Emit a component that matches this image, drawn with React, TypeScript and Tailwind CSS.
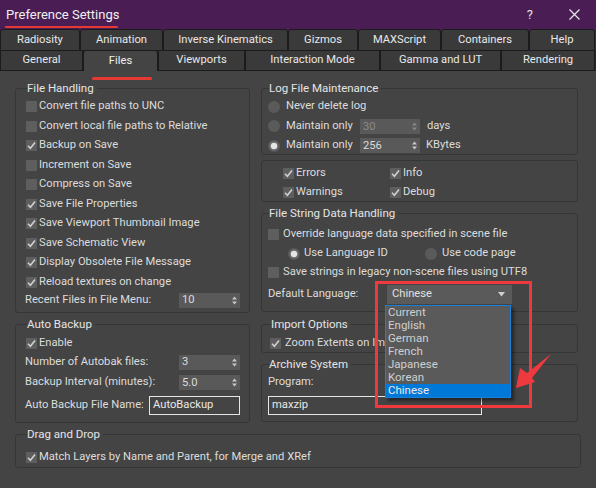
import React from "react";

const font = { fontFamily: "Roboto, 'Noto Sans', sans-serif" };

function Check({ on }: { on?: boolean }) {
  return (
    <span className="w-[11px] h-[11px] bg-[#5e5e5e] flex items-center justify-center shrink-0">
      {on && (
        <svg width="9" height="9" viewBox="0 0 9 9">
          <path d="M1 4.8 L3.4 7.2 L8 1.6" stroke="#d0d0d0" strokeWidth="1.6" fill="none" />
        </svg>
      )}
    </span>
  );
}

function Radio({ on }: { on?: boolean }) {
  return (
    <span className="w-[12px] h-[12px] rounded-full bg-[#5a5a5a] flex items-center justify-center shrink-0">
      {on && <span className="w-[6px] h-[6px] rounded-full bg-[#e6e6e6] shadow-[0_0_2px_#fff]" />}
    </span>
  );
}

function CheckRow({ label, on, h = "h-[19.5px]" }: { label: string; on?: boolean; h?: string }) {
  return (
    <div className={`flex items-center gap-[2px] ${h}`}>
      <Check on={on} />
      <span className="whitespace-nowrap">{label}</span>
    </div>
  );
}

function Spinner({ value, w = "w-[61px]", dim }: { value: string; w?: string; dim?: boolean }) {
  return (
    <div className={`${w} h-[15px] bg-[#595959] flex items-center justify-between pl-[3px] pr-[3px] shrink-0 ${dim ? "text-[#8a8a8a]" : ""}`}>
      <span className="leading-none">{value}</span>
      <svg width="5" height="9" viewBox="0 0 5 9">
        <path d="M0 3.5 L2.5 0.5 L5 3.5Z M0 5.5 L2.5 8.5 L5 5.5Z" fill={dim ? "#888" : "#c8c8c8"} />
      </svg>
    </div>
  );
}

function Group({
  title,
  h,
  className = "",
  children,
}: {
  title?: string;
  h: string;
  className?: string;
  children: React.ReactNode;
}) {
  return (
    <fieldset className={`border border-[#363636] rounded-[3px] ${h} ${className}`}>
      {title && <legend className="ml-[1px] pr-[3px] text-[11.5px] leading-[16px] text-[#e4e4e4]">{title}</legend>}
      {children}
    </fieldset>
  );
}

const row1 = [
  ["Radiosity", "w-[80px]"],
  ["Animation", "w-[83px]"],
  ["Inverse Kinematics", "w-[125px]"],
  ["Gizmos", "w-[70px]"],
  ["MAXScript", "w-[83px]"],
  ["Containers", "w-[88px]"],
  ["Help", "w-[66px]"],
];
const row2 = [
  ["General", "w-[83px]"],
  ["Files", "w-[75px]"],
  ["Viewports", "w-[87px]"],
  ["Interaction Mode", "w-[135px]"],
  ["Gamma and LUT", "w-[121px]"],
  ["Rendering", "w-[94px]"],
];

const languages = ["Current", "English", "German", "French", "Japanese", "Korean", "Chinese"];

export default function App() {
  return (
    <div className="relative w-[596px] h-[488px] overflow-hidden bg-[#444444] text-[11.2px] text-[#dcdcdc]" style={font}>
      {/* Title bar */}
      <div className="h-[29px] bg-[#4a1e54] flex items-center justify-between pl-[6px] pr-[16px]">
        <span className="text-[13px] text-[#f0f0f0]">Preference Settings</span>
        <div className="flex items-center gap-[36px]">
          <span className="text-[13px] text-[#e0e0e0]">?</span>
          <svg width="11" height="11" viewBox="0 0 11 11">
            <path d="M0.5 0.5 L10.5 10.5 M10.5 0.5 L0.5 10.5" stroke="#e8e8e8" strokeWidth="1.2" />
          </svg>
        </div>
      </div>

      {/* Tabs */}
      <div className="bg-[#2a2a2a]">
        <div className="flex h-[22px] bg-[#4a1e54]">
          {row1.map(([t, w]) => (
            <div key={t} className={`${w} shrink-0 h-full bg-[#3a3a3a] border border-[#1b1b1b] rounded-t-[3px] flex items-center justify-center text-[#e8e8e8]`}>
              {t}
            </div>
          ))}
        </div>
        <div className="flex h-[20px] bg-[#2a2a2a]">
          {row2.map(([t, w]) =>
            t === "Files" ? (
              <div key={t} className={`${w} shrink-0 h-full bg-[#444444] border-x border-[#1b1b1b] rounded-t-[3px] flex items-center justify-center text-[#f0f0f0]`}>
                {t}
              </div>
            ) : (
              <div key={t} className={`${w} shrink-0 h-full bg-[#3a3a3a] border border-t-0 border-[#1b1b1b] flex items-center justify-center text-[#e8e8e8]`}>
                {t}
              </div>
            )
          )}
        </div>
      </div>

      {/* Body */}
      <div className="px-[15px] pt-[9px]">
        <div className="flex gap-[11px]">
          {/* Left column */}
          <div className="w-[235px] flex flex-col gap-[3px]">
            <Group title="File Handling" h="h-[233px]" className="pl-[10px] pr-[9px]">
              <div className="pt-[1px]">
                <CheckRow label="Convert file paths to UNC" />
                <CheckRow label="Convert local file paths to Relative" />
                <CheckRow label="Backup on Save" on />
                <CheckRow label="Increment on Save" />
                <CheckRow label="Compress on Save" />
                <CheckRow label="Save File Properties" on />
                <CheckRow label="Save Viewport Thumbnail Image" on />
                <CheckRow label="Save Schematic View" on />
                <CheckRow label="Display Obsolete File Message" on />
                <CheckRow label="Reload textures on change" on />
                <div className="flex items-center justify-between h-[16px] -ml-[1px]">
                  <span className="whitespace-nowrap">Recent Files in File Menu:</span>
                  <Spinner value="10" />
                </div>
              </div>
            </Group>
            <Group title="Auto Backup" h="h-[107px]" className="pl-[10px] pr-[9px]">
              <div className="pt-[2px]">
                <CheckRow label="Enable" on h="h-[18px]" />
                <div className="flex items-center justify-between h-[20px] -ml-[1px]">
                  <span className="whitespace-nowrap">Number of Autobak files:</span>
                  <Spinner value="3" />
                </div>
                <div className="flex items-center justify-between h-[21px] -ml-[1px]">
                  <span className="whitespace-nowrap">Backup Interval (minutes):</span>
                  <Spinner value="5.0" />
                </div>
                <div className="flex items-center justify-between h-[20px] mt-[2px] -ml-[1px]">
                  <span className="whitespace-nowrap">Auto Backup File Name:</span>
                  <div className="w-[91px] h-[19px] border border-[#e6e6e6] flex items-center pl-[3px] text-[#e8e8e8] shrink-0">AutoBackup</div>
                </div>
              </div>
            </Group>
          </div>

          {/* Right column */}
          <div className="w-[317px] flex flex-col">
            <Group title="Log File Maintenance" h="h-[75px]" className="pl-[6px] pr-[9px]">
              <div className="pt-[1px]">
                <div className="flex items-center gap-[6px] h-[19.5px]">
                  <Radio />
                  <span>Never delete log</span>
                </div>
                <div className="flex items-center h-[19.5px]">
                  <Radio />
                  <span className="ml-[6px] w-[74px] whitespace-nowrap">Maintain only</span>
                  <Spinner value="30" w="w-[60px]" dim />
                  <span className="ml-[7px]">days</span>
                </div>
                <div className="flex items-center h-[19.5px]">
                  <Radio on />
                  <span className="ml-[6px] w-[74px] whitespace-nowrap">Maintain only</span>
                  <Spinner value="256" w="w-[60px]" />
                  <span className="ml-[6px]">KBytes</span>
                </div>
              </div>
            </Group>
            <Group h="h-[42px]" className="mt-[5px] pl-[21px] pt-[3px]">
              <div className="grid grid-cols-[107px_1fr]">
                <CheckRow label="Errors" on h="h-[19px]" />
                <CheckRow label="Info" on h="h-[19px]" />
                <CheckRow label="Warnings" on h="h-[19px]" />
                <CheckRow label="Debug" on h="h-[19px]" />
              </div>
            </Group>
            <Group title="File String Data Handling" h="h-[107px]" className="mt-[3px] pl-[6px] pr-[9px]">
              <div className="pt-[4px]">
                <div className="flex items-center gap-[4px] h-[19px]">
                  <Check />
                  <span className="whitespace-nowrap">Override language data specified in scene file</span>
                </div>
                <div className="flex items-center h-[19px] pl-[20px]">
                  <Radio on />
                  <span className="ml-[4px] w-[121px] whitespace-nowrap">Use Language ID</span>
                  <Radio />
                  <span className="ml-[5px]">Use code page</span>
                </div>
                <div className="flex items-center gap-[4px] h-[19px]">
                  <Check />
                  <span className="whitespace-nowrap">Save strings in legacy non-scene files using UTF8</span>
                </div>
                <div className="flex items-center h-[20px] mt-[2px]">
                  <span className="w-[119px]">Default Language:</span>
                  <div className="w-[125px] h-[19px] bg-[#5a5a5a] flex items-center justify-between pl-[5px] pr-[7px] text-[#e0e0e0]">
                    <span>Chinese</span>
                    <svg width="7" height="5" viewBox="0 0 7 5">
                      <path d="M0 0 L7 0 L3.5 4.5Z" fill="#d0d0d0" />
                    </svg>
                  </div>
                </div>
              </div>
            </Group>
            <Group title="Import Options" h="h-[37px]" className="mt-[4px] pl-[8px]">
              <div className="pt-[3px]">
                <div className="flex items-center gap-[4px] h-[16px]">
                  <Check on />
                  {/* text runs under the open dropdown list */}
                  <span className="whitespace-nowrap w-[101px] overflow-hidden">Zoom Extents on Import</span>
                </div>
              </div>
            </Group>
            <Group title="Archive System" h="h-[66px]" className="mt-[3px] pl-[6px]">
              <div className="pt-[2px]">
                <div className="h-[16px] flex items-center">Program:</div>
                <div className="mt-[6px] w-[214px] h-[19px] border border-[#e6e6e6] flex items-center pl-[3px] text-[#e8e8e8]">maxzip</div>
              </div>
            </Group>
          </div>
        </div>

        <Group title="Drag and Drop" h="h-[42px]" className="mt-[3px] pl-[10px]">
          <div className="pt-[6px]">
            <CheckRow label="Match Layers by Name and Parent, for Merge and XRef" on h="h-[18px]" />
          </div>
        </Group>
      </div>

      {/* Open dropdown list */}
      <div className="absolute left-[385px] top-[305px] w-[126px] border border-[#1a7fd8] bg-[#5a5a5a] shadow-[3px_3px_3px_rgba(0,0,0,0.45)] text-[11.5px] text-[#cfcfcf]">
        {languages.map((l) => (
          <div key={l} className={`h-[13px] leading-[13px] pl-[2px] overflow-hidden ${l === "Chinese" ? "bg-[#0078d7] text-[#eaeaea]" : ""}`}>
            {l}
          </div>
        ))}
      </div>

      {/* Red annotations */}
      <div className="absolute left-[5px] top-[26px] w-[113px] h-[2px] rounded-full bg-[#e53935]" />
      <div className="absolute left-[92px] top-[77px] w-[60px] h-[3px] rounded-full bg-[#e53935]" />
      <div className="absolute left-[375px] top-[281px] w-[157px] h-[127px] border-[3px] border-[#ee3a3f]" />
      <svg className="absolute left-0 top-0" width="596" height="488" viewBox="0 0 596 488">
        <polygon points="516,388 520,368 527,373 551,354 532,378 535,382" fill="#ee3a3f" />
      </svg>
    </div>
  );
}
